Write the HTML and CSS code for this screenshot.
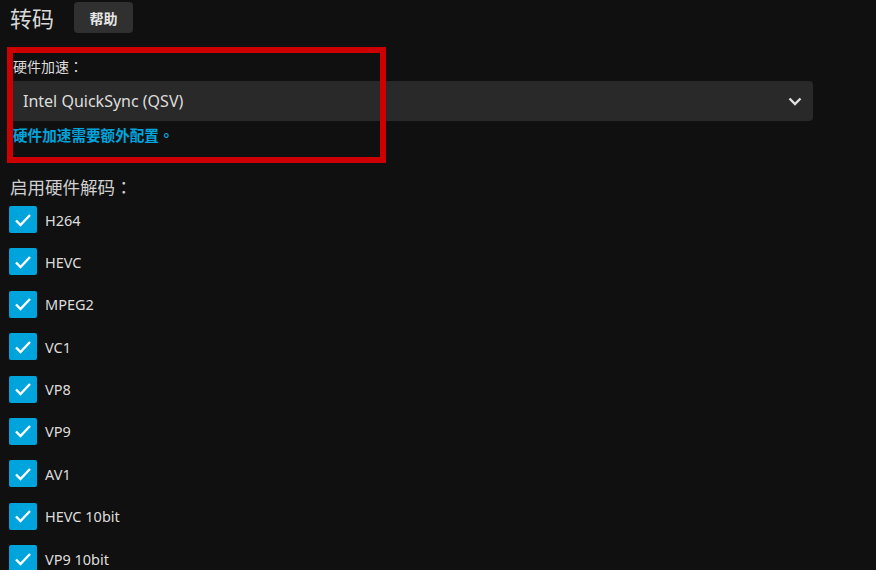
FILE: index.html
```html
<!DOCTYPE html>
<html lang="zh-CN">
<head>
  <meta charset="UTF-8">
  <meta name="viewport" content="width=device-width, initial-scale=1.0">
  <title>转码</title>
  <link rel="stylesheet" href="styles.css">
</head>
<body>

  <div class="page">
    <!-- En-tête -->
    <div class="section-header">
      <h2 class="section-title cjk">转码</h2>
      <button class="help-btn cjk">帮助</button>
    </div>

    <!-- Accélération matérielle -->
    <div class="field">
      <label class="field-label cjk" for="hw-accel">硬件加速<span lang="zh-TW">：</span></label>
      <div class="select-wrap">
        <select id="hw-accel" class="select">
          <option>Intel QuickSync (QSV)</option>
        </select>
        <svg class="select-arrow" width="14" height="9" viewBox="0 0 14 9">
          <path d="M1.5 1.5 L7 7 L12.5 1.5" fill="none" stroke="#e0e0e0" stroke-width="2.4"/>
        </svg>
      </div>
      <div class="field-help cjk">硬件加速需要额外配置<span lang="zh-TW">。</span></div>
    </div>

    <!-- Décodage matériel -->
    <h3 class="list-title cjk">启用硬件解码<span lang="zh-TW">：</span></h3>
    <div class="check-list">
      <label class="check-row"><span class="check-box"><svg width="18" height="14" viewBox="0 0 18 14"><path d="M2 7.5 L6.5 12 L16 2" fill="none" stroke="#fff" stroke-width="2.4"/></svg></span>H264</label>
      <label class="check-row"><span class="check-box"><svg width="18" height="14" viewBox="0 0 18 14"><path d="M2 7.5 L6.5 12 L16 2" fill="none" stroke="#fff" stroke-width="2.4"/></svg></span>HEVC</label>
      <label class="check-row"><span class="check-box"><svg width="18" height="14" viewBox="0 0 18 14"><path d="M2 7.5 L6.5 12 L16 2" fill="none" stroke="#fff" stroke-width="2.4"/></svg></span>MPEG2</label>
      <label class="check-row"><span class="check-box"><svg width="18" height="14" viewBox="0 0 18 14"><path d="M2 7.5 L6.5 12 L16 2" fill="none" stroke="#fff" stroke-width="2.4"/></svg></span>VC1</label>
      <label class="check-row"><span class="check-box"><svg width="18" height="14" viewBox="0 0 18 14"><path d="M2 7.5 L6.5 12 L16 2" fill="none" stroke="#fff" stroke-width="2.4"/></svg></span>VP8</label>
      <label class="check-row"><span class="check-box"><svg width="18" height="14" viewBox="0 0 18 14"><path d="M2 7.5 L6.5 12 L16 2" fill="none" stroke="#fff" stroke-width="2.4"/></svg></span>VP9</label>
      <label class="check-row"><span class="check-box"><svg width="18" height="14" viewBox="0 0 18 14"><path d="M2 7.5 L6.5 12 L16 2" fill="none" stroke="#fff" stroke-width="2.4"/></svg></span>AV1</label>
      <label class="check-row"><span class="check-box"><svg width="18" height="14" viewBox="0 0 18 14"><path d="M2 7.5 L6.5 12 L16 2" fill="none" stroke="#fff" stroke-width="2.4"/></svg></span>HEVC 10bit</label>
      <label class="check-row"><span class="check-box"><svg width="18" height="14" viewBox="0 0 18 14"><path d="M2 7.5 L6.5 12 L16 2" fill="none" stroke="#fff" stroke-width="2.4"/></svg></span>VP9 10bit</label>
    </div>
  </div>

  <!-- Cadre d'annotation rouge -->
  <div class="highlight-box"></div>

</body>
</html>
```

FILE: styles.css
```css
body {
  margin: 0;
  background-color: #101010;
  color: #dddddd;
  font-family: "Noto Sans", "Noto Sans CJK SC", sans-serif;
  overflow: hidden;
}

/* Texte chinois : ponctuation pleine chasse, centrée */
.cjk {
  font-family: "Noto Sans CJK TC", "Noto Sans", sans-serif;
  text-spacing-trim: space-all;
}

.page {
  padding: 2px 63px 0 10px;
}

/* En-tête */
.section-header {
  display: flex;
  align-items: center;
  gap: 20px;
  height: 31px;
}

.section-title {
  margin: 0;
  font-size: 22px;
  font-weight: 400;
  line-height: 31px;
  color: #d8d8d8;
}

.help-btn {
  height: 31px;
  width: 59px;
  padding: 0;
  background-color: #303030;
  color: #e6e6e6;
  border: none;
  border-radius: 4px;
  font-size: 14px;
  font-weight: 700;
}

/* Champ select */
.field {
  margin-top: 23px;
  padding-left: 3px;
}

.field-label {
  display: block;
  font-size: 14px;
  line-height: 20px;
  height: 25px;
}

.select-wrap {
  position: relative;
  margin-left: -3px;
}

.select {
  appearance: none;
  display: block;
  width: 100%;
  height: 40px;
  padding: 0 13px;
  background-color: #292929;
  color: #dddddd;
  border: none;
  border-radius: 4px;
  font-family: inherit;
  font-size: 16px;
}

.select-arrow {
  position: absolute;
  right: 11px;
  top: 16px;
}

.field-help {
  margin-top: 4px;
  font-size: 14.6px;
  font-weight: 700;
  line-height: 20px;
  color: #00a4dc;
}

/* Liste de cases à cocher */
.list-title {
  margin: 32px 0 0 0;
  font-size: 17.5px;
  font-weight: 400;
  line-height: 20px;
  color: #d0d0d0;
}

.check-list {
  display: flex;
  flex-direction: column;
  gap: 15.4px;
  margin-top: 9px;
}

.check-row {
  display: flex;
  align-items: center;
  gap: 8px;
  height: 27px;
  margin-left: -1px;
  font-size: 14.5px;
  color: #dddddd;
}

.check-box {
  display: flex;
  justify-content: center;
  align-items: center;
  width: 28px;
  height: 27px;
  background-color: #00a4dc;
  border-radius: 2px;
}

/* Cadre rouge */
.highlight-box {
  position: absolute;
  left: 7px;
  top: 47px;
  width: 379px;
  height: 116px;
  box-sizing: border-box;
  border: 6px solid #cc0000;
}
```
